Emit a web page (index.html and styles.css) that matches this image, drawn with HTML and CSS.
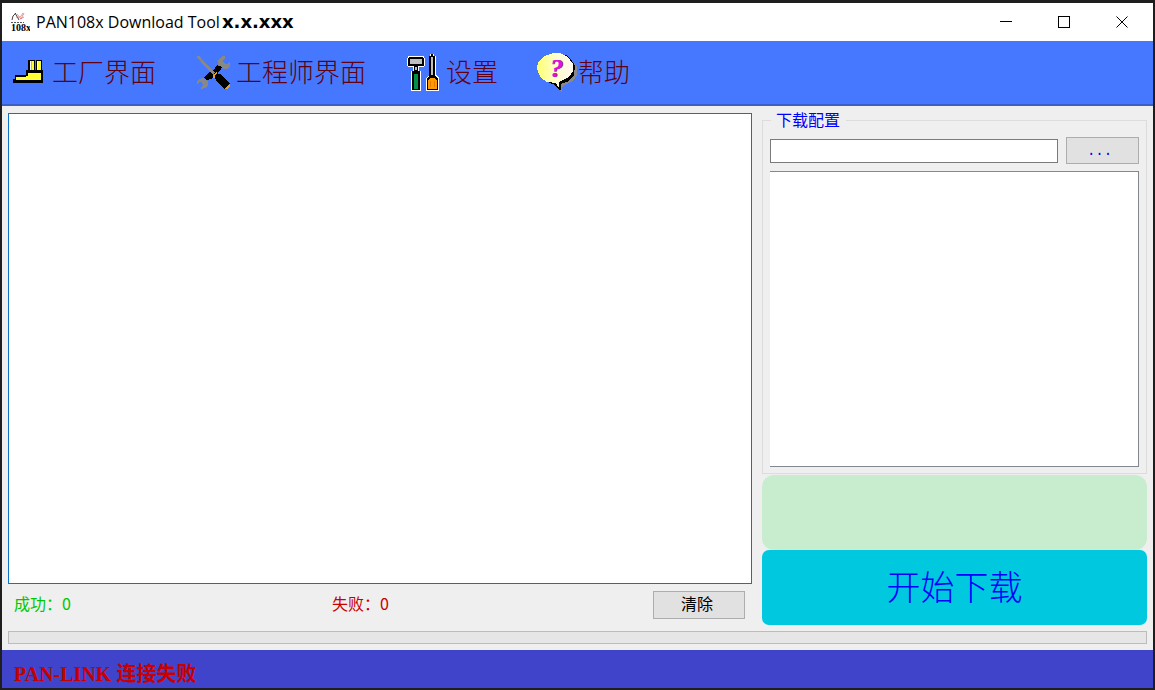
FILE: index.html
```
<!DOCTYPE html>
<html lang="zh-CN">
<head>
<meta charset="utf-8">
<title>PAN108x Download Tool</title>
<link rel="stylesheet" href="styles.css">
</head>
<body>
<div class="window">
  <header class="titlebar">
    <svg class="logo" viewBox="10 10 20 22" aria-hidden="true">
      <path d="M12 19 13 15 16 12M15 12l4 7" fill="none" stroke="#444"/>
      <path d="M16 16q4 2 7-4M17 13l4 5 3-6M20 18l4-2" fill="none" stroke="#d66" stroke-width=".7"/>
      <path d="M11 21.500h13" stroke="#555" stroke-dasharray="2 1"/>
      <text class="logo-text" x="11" y="30">108x</text>
    </svg>
    <h1 class="title">PAN108x Download Tool <b class="version">x.x.xxx</b></h1>
    <div class="controls">
      <button class="control" type="button" aria-label="最小化"><svg viewBox="0 0 12 12"><path d="M0 5.500h12"/></svg></button>
      <button class="control" type="button" aria-label="最大化"><svg viewBox="0 0 12 12"><path d="M.5.5h11v11H.5z"/></svg></button>
      <button class="control" type="button" aria-label="关闭"><svg viewBox="0 0 12 12"><path class="smooth" d="M.5.5l11 11M11.500.5l-11 11"/></svg></button>
    </div>
  </header>

  <nav class="toolbar">
    <button class="tool" type="button">
      <svg class="tool-icon" viewBox="8 50 44 45" aria-hidden="true">
        <path d="M28 60h14v10h1v13H13v-4h2v-4h11v-5h2z"/>
        <path fill="#ff3" d="M28 73h13v7H16v-3h10v-1h2z"/>
        <path fill="#ff3" d="M32 61h2v9h-2zM38 61h3v9h-3z"/>
        <path fill="#fff" d="M30 61h1v9h-1zM37 61h1v9h-1z"/>
        <path fill="#0ff" d="M31 61h1v9h-1z"/>
        <path fill="#4678ff" d="M35 60h1v10h-1z"/>
      </svg>
      <span>工厂界面</span>
    </button>
    <button class="tool" type="button">
      <svg class="tool-icon" viewBox="192 50 44 45" aria-hidden="true">
        <path d="M206 80l-2-3 5-5 4-1 4-6 5 2-1 3-6 5-3 4z"/>
        <path fill="#888" d="M197 56h3l2 4 4 3 4 5 5 4-1 3-2-1-4-5-5-4-3-5-3-2z"/>
        <path fill="#888" d="M218 61l2-3 3-2h2v2l-2 3 2 3h3l2-3v5l-3 3h-4l-1-2-4-2z"/>
        <path fill="#888" d="M198 80l4-2 4 1 2 3v3l-3 3-4 1-1-1 3-3-1-3h-3l-2 3v-3z"/>
        <path d="M213 76l3-3 4 1 6 5 4 5-2 4-4 1-8-9z"/>
        <path d="M213 75l3-3 2 1-3 2v3h-2zM225 89l3-4 2-1v2l-3 3z" fill="#e9a020"/>
      </svg>
      <span>工程师界面</span>
    </button>
    <button class="tool" type="button">
      <svg class="tool-icon" viewBox="402 50 44 45" aria-hidden="true">
        <path fill="#fff" d="M408 56h16v2h1v8h-1v1h-5v4h2v20h-10V71h2v-4h-5v-1h-1v-8h1z"/>
        <path d="M409 57h14v1h1v8h-6v5h2v19h-8V71h2v-5h-6v-8h1z"/>
        <path fill="#c0c0c0" d="M410 59h12v5h-12zM415 67h2v3h-2z"/>
        <path fill="#009048" d="M414 74h4v15h-4z"/>
        <path fill="#fff" d="M430 54h4v2h2v19l3 3v13h-13V78l3-3V56h1z"/>
        <path d="M431 54h2v2h2v20l3 2v12h-11V78l2-2V56h2z"/>
        <path fill="#c0c0c0" d="M431 57h2v18h-2z"/>
        <path fill="#f90" d="M430 78h4l3 2v9h-9v-9z"/>
        <path fill="#e87800" d="M430 81h1v6h-1zM434 81h1v6h-1z"/>
      </svg>
      <span>设置</span>
    </button>
    <button class="tool" type="button">
      <svg class="tool-icon" viewBox="534 50 44 45" aria-hidden="true">
        <defs>
          <linearGradient id="bubble"><stop offset="0" stop-color="#ffff70"/><stop offset=".5" stop-color="#ffffc8"/><stop offset="1" stop-color="#fff8f0"/></linearGradient>
        </defs>
        <path fill="#888" d="M574 62l3 5v8l-4 6-8 4-3 2v6l-3-3 1-6z"/>
        <path d="M538 74l7 7 10 4 4 5h2v-6l8-3 5-6 1-9-4-7-5-4z"/>
        <path fill="url(#bubble)" d="M537 67l2-6 6-5 8-3h7l8 4 5 7v7l-4 6-8 4-2 1v6l-3-5-9-1-6-4-3-6z"/>
        <text class="question-shade" x="551" y="77">?</text>
        <text class="question" x="550" y="77">?</text>
      </svg>
      <span>帮助</span>
    </button>
  </nav>

  <main class="content">
    <section class="log-panel">
      <textarea class="log" aria-label="日志" readonly></textarea>
      <div class="counters">
        <p class="counter success">成功：<output>0</output></p>
        <p class="counter failure">失败：<output>0</output></p>
        <button class="button clear" type="button">清除</button>
      </div>
    </section>
    <section class="side">
      <fieldset class="group">
        <legend>下载配置</legend>
        <div class="file-row">
          <input class="path" type="text" aria-label="配置文件">
          <button class="button browse" type="button" aria-label="浏览">...</button>
        </div>
        <textarea class="details" aria-label="配置内容" readonly></textarea>
      </fieldset>
      <div class="result" role="status"></div>
      <button class="start" type="button">开始下载</button>
    </section>
    <div class="progress" role="progressbar" aria-label="下载进度" aria-valuenow="0"></div>
  </main>

  <footer class="statusbar">PAN-LINK 连接失败</footer>
</div>
</body>
</html>
```

FILE: styles.css
```
* { box-sizing: border-box; }
body { margin: 0; }
button, input, textarea { font: inherit; color: inherit; border-radius: 0; }
button { padding: 0; }
textarea { display: block; resize: none; outline: none; }

.window {
  display: flex;
  flex-direction: column;
  min-height: 100vh;
  border: 2px solid #1e1e1e;
  border-top-width: 3px;
  background: #efefef;
  font: 400 16px/20px "Noto Sans CJK SC", sans-serif;
}

.titlebar { display: flex; align-items: center; height: 38px; padding: 0 2px 0 8px; background: #fff; color: #000; }
.logo { width: 20px; height: 22px; }
.logo-text { font: bold 10px "Liberation Serif", serif; }
.title { flex: 1; margin: 0 0 0 6px; font: 400 16px/24px "Open Sans", sans-serif; }
.version { margin-left: -2px; font: bold 18px/24px "DejaVu Sans", sans-serif; }
.controls { display: flex; }
.control { display: grid; place-items: center; width: 58px; height: 36px; border: 0; background: none; }
.control svg { width: 12px; height: 12px; }
.control path { fill: none; stroke: #000; shape-rendering: crispEdges; }
.control .smooth { shape-rendering: auto; }

.toolbar {
  display: flex;
  align-items: center;
  gap: 36px;
  height: 65px;
  padding: 0 6px;
  border-bottom: 2px solid #3a60c4;
  background: #4678ff;
}
.tool { display: flex; align-items: center; border: 0; background: none; color: #600010; font-size: 26px; font-weight: 300; line-height: 36px; }
.tool span { padding-bottom: 3px; }
.tool-icon { width: 44px; height: 45px; shape-rendering: crispEdges; }
.question, .question-shade { fill: #e010e0; font: italic bold 26px "Liberation Serif", serif; }
.question-shade { fill: #801090; }

.content {
  flex: 1;
  display: grid;
  grid-template-columns: 744fr 385fr;
  grid-template-rows: 1fr 13px;
  column-gap: 10px;
  row-gap: 6px;
  padding: 7px 6px 6px;
}
.log-panel { display: flex; flex-direction: column; }
.log { flex: 1; width: 100%; border: 1px solid #0e74c8; background: #fff; }
.counters { display: grid; grid-template-columns: 318fr 321fr 92px; align-items: center; height: 41px; padding: 0 7px 0 6px; }
.counter { margin: 0; padding-bottom: 3px; }
.success { color: #00c800; }
.failure { color: #c80000; }
.button { border: 1px solid #adadad; background: #e1e1e1; }
.clear { height: 28px; padding: 0 4px 3px 0; line-height: 20px; }

.side { display: flex; flex-direction: column; }
.group {
  flex: 1;
  display: flex;
  flex-direction: column;
  gap: 7px;
  min-width: 0;
  margin: 0 0 1px;
  padding: 10px 7px 6px;
  border: 1px solid #dcdcdc;
  color: #00f;
}
.group legend { height: 14px; margin-left: 1px; padding: 0 6px 0 5px; line-height: 12px; }
.file-row { display: flex; align-items: center; gap: 8px; height: 27px; }
.path { flex: 1; min-width: 0; height: 24px; border: 1px solid #7a7a7a; background: #fff; }
.browse { width: 73px; height: 27px; padding-right: 6px; font: 14px/20px "Liberation Mono", monospace; }
.details { flex: 1; width: 100%; border: 1px solid #828790; border-left: 0; background: #fff; }
.result { height: 75px; border-radius: 12px; background: #c8edce; }
.start { height: 75px; padding-bottom: 3px; border: 0; border-radius: 7px; background: #00c8de; color: #00f; font-size: 34px; font-weight: 300; line-height: 48px; }

.progress { grid-column: 1 / -1; border: 1px solid #bcbcbc; background: #e6e6e6; }

.statusbar { height: 38px; padding: 5px 12px 0; background: #4044cb; color: #c80000; font: bold 20px/38px "Liberation Serif", "Noto Sans CJK SC", serif; }
```
